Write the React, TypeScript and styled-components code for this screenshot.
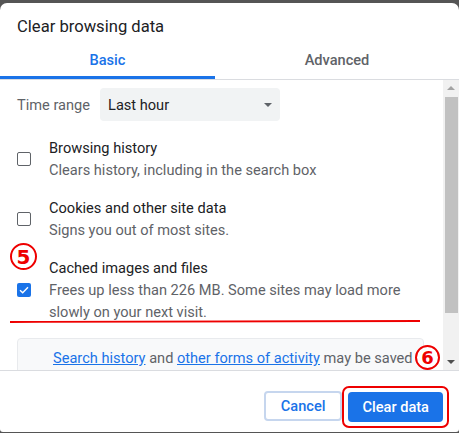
import React from 'react'
import styled, { createGlobalStyle } from 'styled-components'

const GlobalStyle = createGlobalStyle`
    html, body {
        margin: 0;
        padding: 0;
        background: #555;
    }
    body {
        font-family: Roboto, "Liberation Sans", Arial, sans-serif;
        -webkit-font-smoothing: antialiased;
    }
`

const Dialog = styled.div`
    margin-top: 3px;
    width: 459px;
    height: 429px;
    background: white;
    border-radius: 7px 7px 3px 3px;
    display: flex;
    flex-direction: column;
    overflow: hidden;
`
const Header = styled.div`
    padding: 14px 17px 0;
    height: 27px;
    font-size: 16.6px;
    line-height: 20px;
    color: #202124;
`
const TabBar = styled.div`
    display: grid;
    grid-template-columns: 215px 1fr;
    border-bottom: 1px solid #dadce0;
`
const Tab = styled.div<{ active?: boolean }>`
    height: 32px;
    display: flex;
    align-items: center;
    justify-content: center;
    font-size: 14.6px;
    font-weight: 500;
    color: ${p => (p.active ? '#1a73e8' : '#5f6368')};
    border-bottom: 3px solid ${p => (p.active ? '#1a73e8' : 'transparent')};
`
const Body = styled.div`
    height: 290px;
    display: flex;
    flex-direction: row;
`
const Content = styled.div`
    position: relative;
    flex: 1;
    overflow: hidden;
    padding: 8px 0 0 17px;
`
const RangeRow = styled.div`
    display: flex;
    align-items: center;
    gap: 10px;
    height: 33px;
    margin-bottom: 8px;
`
const RangeLabel = styled.span`
    font-size: 14.6px;
    color: #5f6368;
`
const Select = styled.div`
    width: 180px;
    height: 33px;
    box-sizing: border-box;
    padding: 0 8px 0 8px;
    background: #f1f3f4;
    border-radius: 4px;
    display: flex;
    align-items: center;
    justify-content: space-between;
    font-size: 14.6px;
    color: #202124;
`
const Caret = styled.span`
    width: 0;
    height: 0;
    border-left: 4px solid transparent;
    border-right: 4px solid transparent;
    border-top: 4px solid #5f6368;
`
const Option = styled.div`
    display: flex;
    align-items: center;
    gap: 18px;
    padding: 8px 0;
    margin-right: 26px;
`
const Box = styled.span<{ checked?: boolean }>`
    flex: none;
    width: 14px;
    height: 14px;
    box-sizing: border-box;
    border-radius: 2px;
    border: ${p => (p.checked ? 'none' : '1.5px solid #5f6368')};
    background: ${p => (p.checked ? '#1a73e8' : 'white')};
    display: flex;
    align-items: center;
    justify-content: center;
`
const OptionText = styled.div`
    font-size: 14.6px;
    line-height: 22px;
`
const OptionTitle = styled.div`
    color: #202124;
`
const OptionSub = styled.div`
    color: #5f6368;
`
const InfoBox = styled.div`
    margin: 7px 19px 0 0;
    padding: 8px 0 8px 35px;
    border: 1px solid #e8eaed;
    border-radius: 4px;
    background: #f8f9fa;
    font-size: 14.6px;
    line-height: 22px;
    color: #5f6368;
    white-space: nowrap;
`
const Link = styled.a`
    color: #1a73e8;
    text-decoration: underline;
`
const Marker = styled.div<{ size: number }>`
    position: absolute;
    width: ${p => p.size}px;
    height: ${p => p.size}px;
    box-sizing: border-box;
    border: 2.5px solid #e00;
    border-radius: 50%;
    background: white;
    color: #e00;
    font-family: "DejaVu Sans", sans-serif;
    font-weight: bold;
    font-size: ${p => p.size - 7}px;
    line-height: 1;
    display: flex;
    align-items: center;
    justify-content: center;
`
const Underline = styled.svg`
    position: absolute;
    left: 0;
    top: 238px;
`
const Scrollbar = styled.div`
    width: 16px;
    background: #f1f1f1;
    display: flex;
    flex-direction: column;
    align-items: center;
`
const Arrow = styled.span<{ down?: boolean }>`
    width: 0;
    height: 0;
    margin: ${p => (p.down ? ''  : '6px 0 4px')};
    border-left: 4px solid transparent;
    border-right: 4px solid transparent;
    ${p => (p.down ? 'border-top: 4px solid #505050;' : 'border-bottom: 4px solid #a3a3a3;')}
`
const Thumb = styled.div`
    width: 13px;
    height: 216px;
    margin-top: 3px;
    margin-bottom: 47px;
    background: #c1c1c1;
`
const Footer = styled.div`
    border-top: 1px solid #dadce0;
    flex: 1;
    display: flex;
    justify-content: flex-end;
    align-items: flex-start;
    gap: 6px;
    padding: 20px 14px 0 0;
`
const Button = styled.button<{ primary?: boolean }>`
    height: 30px;
    box-sizing: border-box;
    border-radius: 4px;
    font-family: inherit;
    font-size: 14.6px;
    font-weight: 500;
    padding: 0 ${p => (p.primary ? '14px' : '15px')};
    border: ${p => (p.primary ? 'none' : '2px solid #c6d6ee')};
    background: ${p => (p.primary ? '#1a73e8' : 'white')};
    color: ${p => (p.primary ? 'white' : '#1a73e8')};
`
const Highlight = styled.div`
    position: relative;
    margin-top: -5px;
    margin-right: -4px;
    padding: 4px;
    border: 2px solid #e00;
    border-radius: 7px;
    margin-left: -6px;
`

const options = [
    { title: 'Browsing history', sub: ['Clears history, including in the search box'], checked: false },
    { title: 'Cookies and other site data', sub: ['Signs you out of most sites.'], checked: false },
    {
        title: 'Cached images and files',
        sub: ['Frees up less than 226 MB. Some sites may load more', 'slowly on your next visit.'],
        checked: true,
    },
]

const Check = () => (
    <svg width="10" height="8" viewBox="0 0 10 8">
        <path d="M1 4.2 L3.7 6.8 L9 1.3" fill="none" stroke="white" strokeWidth="1.4" />
    </svg>
)

const App = () => {
    return (
        <>
            <GlobalStyle />
            <Dialog>
                <Header>Clear browsing data</Header>
                <TabBar>
                    <Tab active>Basic</Tab>
                    <Tab>Advanced</Tab>
                </TabBar>
                <Body>
                    <Content>
                        <RangeRow>
                            <RangeLabel>Time range</RangeLabel>
                            <Select>
                                Last hour
                                <Caret />
                            </Select>
                        </RangeRow>
                        {options.map((o, idx) => (
                            <Option key={idx}>
                                <Box checked={o.checked}>{o.checked && <Check />}</Box>
                                <OptionText>
                                    <OptionTitle>{o.title}</OptionTitle>
                                    {o.sub.map((line, i) => (
                                        <OptionSub key={i}>{line}</OptionSub>
                                    ))}
                                </OptionText>
                            </Option>
                        ))}
                        <InfoBox>
                            <Link>Search history</Link> and <Link>other forms of activity</Link> may be saved
                        </InfoBox>
                        <Underline width="430" height="6" viewBox="0 0 430 6">
                            <path d="M10 4 C120 3.5 220 2.5 420 3" fill="none" stroke="#e00" strokeWidth="1.8" />
                        </Underline>
                        <Marker size={27} style={{ left: 10, top: 163 }}>5</Marker>
                        <Marker size={25} style={{ left: 415, top: 265 }}>6</Marker>
                    </Content>
                    <Scrollbar>
                        <Arrow />
                        <Thumb />
                        <Arrow down />
                    </Scrollbar>
                </Body>
                <Footer>
                    <Button>Cancel</Button>
                    <Highlight>
                        <Button primary>Clear data</Button>
                    </Highlight>
                </Footer>
            </Dialog>
        </>
    )
}

export default App
